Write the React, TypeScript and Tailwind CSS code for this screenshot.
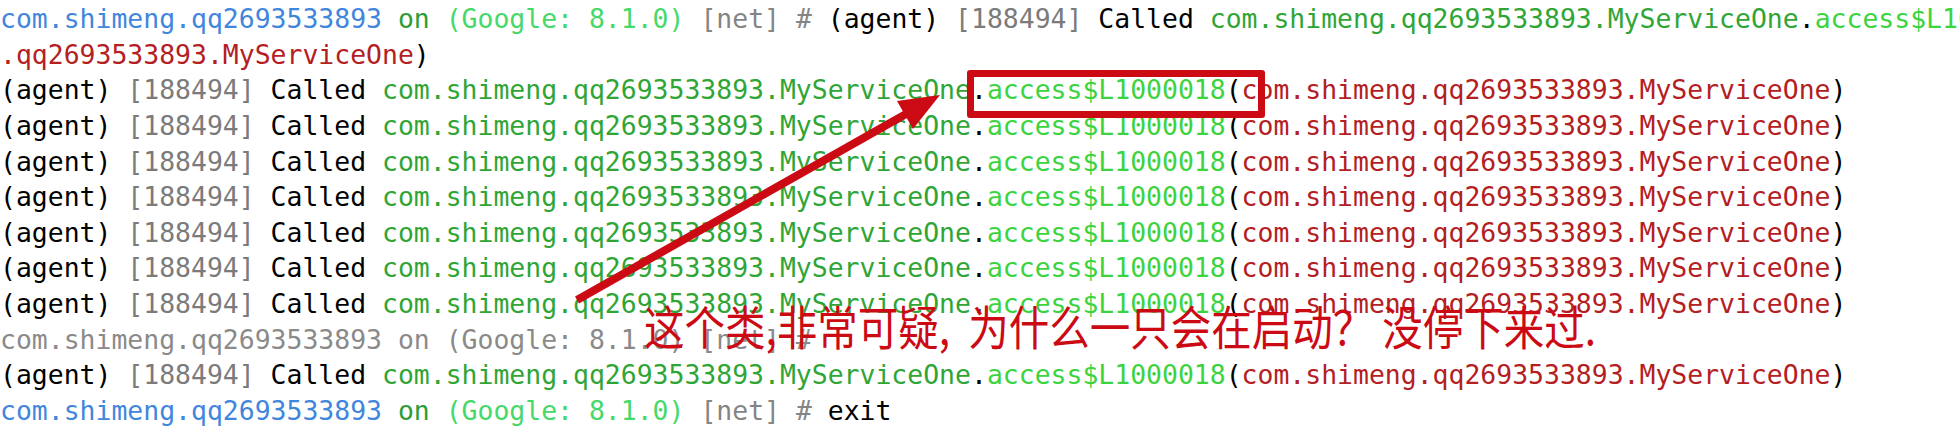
import React from "react";

type Seg = [string, string];

const PATH = "com.shimeng.qq2693533893.MyServiceOne";

const agentLine: Seg[] = [
  ["(agent) ", "text-black"],
  ["[188494]", "text-[#7b7b7b]"],
  [" Called ", "text-black"],
  [PATH, "text-[#2fa535]"],
  [".", "text-black"],
  ["access$L1000018", "text-[#3bd43f]"],
  ["(", "text-black"],
  [PATH, "text-[#b3201f]"],
  [")", "text-black"],
];

const lines: Seg[][] = [
  [
    ["com.shimeng.qq2693533893", "text-[#3f86dc]"],
    [" ", ""],
    ["on", "text-[#2c9d36]"],
    [" ", ""],
    ["(Google: 8.1.0)", "text-[#45d96b]"],
    [" ", ""],
    ["[net]", "text-[#858585]"],
    [" ", ""],
    ["#", "text-[#858585]"],
    [" ", ""],
    ...agentLine,
  ],
  [
    [".qq2693533893.MyServiceOne", "text-[#b3201f]"],
    [")", "text-black"],
  ],
  agentLine,
  agentLine,
  agentLine,
  agentLine,
  agentLine,
  agentLine,
  agentLine,
  [["com.shimeng.qq2693533893 on (Google: 8.1.0) [net] #", "text-[#8a8a8a]"]],
  agentLine,
  [
    ["com.shimeng.qq2693533893", "text-[#3f86dc]"],
    [" ", ""],
    ["on", "text-[#2c9d36]"],
    [" ", ""],
    ["(Google: 8.1.0)", "text-[#45d96b]"],
    [" ", ""],
    ["[net]", "text-[#858585]"],
    [" ", ""],
    ["#", "text-[#858585]"],
    [" ", ""],
    ["exit", "text-black"],
  ],
];

const App = () => {
  return (
    <div className="relative w-[1960px] h-[434px] overflow-hidden bg-white">
      <div className="flex flex-col pt-[1px] font-['DejaVu_Sans_Mono',monospace] text-[26.44px]">
        {lines.map((line, idx) => (
          <div key={idx} className="h-[35.64px] leading-[35.64px] whitespace-pre">
            {line.map(([text, color], i) => (
              <span key={i} className={color}>
                {text}
              </span>
            ))}
          </div>
        ))}
      </div>

      {/* annotation box */}
      <div className="absolute left-[967px] top-[70px] w-[298px] h-[48px] border-[7px] border-[#cc0a14] rounded-[3px]" />

      {/* annotation arrow */}
      <svg className="absolute left-0 top-0" width="1960" height="434" viewBox="0 0 1960 434">
        <line x1="577" y1="300" x2="906" y2="114" stroke="#cc0a14" strokeWidth="8" />
        <polygon points="940,95 913,129 897,101" fill="#cc0a14" />
      </svg>

      {/* annotation note */}
      <div className="absolute left-[644px] top-[302px] leading-none whitespace-pre text-[40.5px] text-[#cc0a14] font-['Noto_Sans_CJK_SC',sans-serif] origin-top scale-y-[1.15]">
        这个类,非常可疑,  为什么一只会在启动？ 没停下来过.
      </div>
    </div>
  );
};

export default App;
